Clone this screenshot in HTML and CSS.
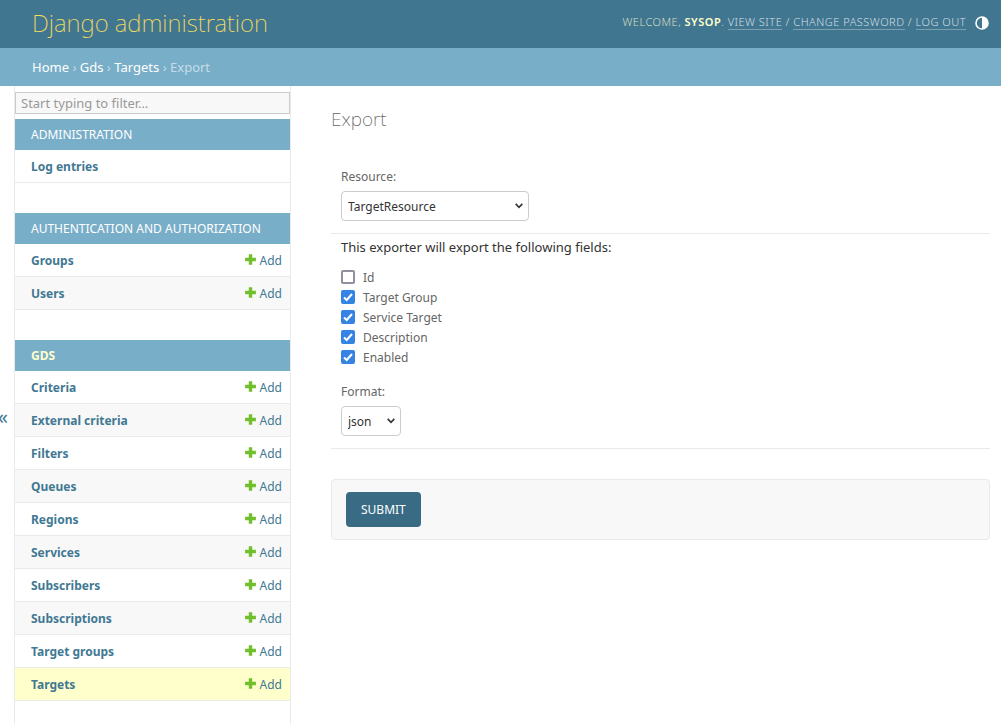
FILE: index.html
```html
<!DOCTYPE html>
<html lang="en">
<head>
<meta charset="utf-8">
<meta name="viewport" content="width=device-width, initial-scale=1">
<title>Export | Django administration</title>
<link rel="stylesheet" href="styles.css">
</head>
<body>
<svg class="sprite" aria-hidden="true">
  <symbol id="plus" viewBox="0 0 11 11"><path d="M3.8 0.2h3.4v3.6h3.7v3.4H7.2v3.6H3.8V7.2H0.1V3.8h3.7z" fill="#70bf2b"/></symbol>
</svg>
<header class="header">
  <div class="site-name">Django administration</div>
  <div class="user-tools">
    <span>Welcome, <strong>sysop</strong>. <a href="#">View site</a> / <a href="#">Change password</a> / <a href="#">Log out</a></span>
    <button class="theme-toggle" type="button" aria-label="Toggle theme">
      <svg width="14" height="14" viewBox="0 0 14 14"><circle cx="7" cy="7" r="6" fill="none" stroke="#fff" stroke-width="1.6"/><path d="M7 1a6 6 0 0 1 0 12z" fill="#fff"/></svg>
    </button>
  </div>
</header>
<nav class="breadcrumbs" aria-label="Breadcrumbs"><a href="#">Home</a> › <a href="#">Gds</a> › <a href="#">Targets</a> › Export</nav>
<div class="main">
  <button class="nav-toggle" type="button" aria-label="Toggle navigation">«</button>
  <nav class="sidebar" aria-label="Sidebar">
    <input class="nav-filter" type="search" placeholder="Start typing to filter…" aria-label="Filter navigation items">
    <table class="module">
      <caption><a href="#">Administration</a></caption>
      <tr><th scope="row"><a href="#">Log entries</a></th><td></td></tr>
    </table>
    <table class="module">
      <caption><a href="#">Authentication and Authorization</a></caption>
      <tr><th scope="row"><a href="#">Groups</a></th><td><a class="add" href="#"><svg><use href="#plus"/></svg>Add</a></td></tr>
      <tr><th scope="row"><a href="#">Users</a></th><td><a class="add" href="#"><svg><use href="#plus"/></svg>Add</a></td></tr>
    </table>
    <table class="module current-app">
      <caption><a href="#">Gds</a></caption>
      <tr><th scope="row"><a href="#">Criteria</a></th><td><a class="add" href="#"><svg><use href="#plus"/></svg>Add</a></td></tr>
      <tr><th scope="row"><a href="#">External criteria</a></th><td><a class="add" href="#"><svg><use href="#plus"/></svg>Add</a></td></tr>
      <tr><th scope="row"><a href="#">Filters</a></th><td><a class="add" href="#"><svg><use href="#plus"/></svg>Add</a></td></tr>
      <tr><th scope="row"><a href="#">Queues</a></th><td><a class="add" href="#"><svg><use href="#plus"/></svg>Add</a></td></tr>
      <tr><th scope="row"><a href="#">Regions</a></th><td><a class="add" href="#"><svg><use href="#plus"/></svg>Add</a></td></tr>
      <tr><th scope="row"><a href="#">Services</a></th><td><a class="add" href="#"><svg><use href="#plus"/></svg>Add</a></td></tr>
      <tr><th scope="row"><a href="#">Subscribers</a></th><td><a class="add" href="#"><svg><use href="#plus"/></svg>Add</a></td></tr>
      <tr><th scope="row"><a href="#">Subscriptions</a></th><td><a class="add" href="#"><svg><use href="#plus"/></svg>Add</a></td></tr>
      <tr><th scope="row"><a href="#">Target groups</a></th><td><a class="add" href="#"><svg><use href="#plus"/></svg>Add</a></td></tr>
      <tr class="current"><th scope="row"><a href="#" aria-current="page">Targets</a></th><td><a class="add" href="#"><svg><use href="#plus"/></svg>Add</a></td></tr>
    </table>
  </nav>
  <main class="content">
    <h1>Export</h1>
    <form>
      <div class="form-row">
        <label for="resource">Resource:</label>
        <select id="resource" class="wide"><option>TargetResource</option></select>
      </div>
      <div class="form-row fields">
        <p>This exporter will export the following fields:</p>
        <ul class="checks">
          <li><input type="checkbox" id="f1"><label for="f1">Id</label></li>
          <li><input type="checkbox" id="f2" checked><label for="f2">Target Group</label></li>
          <li><input type="checkbox" id="f3" checked><label for="f3">Service Target</label></li>
          <li><input type="checkbox" id="f4" checked><label for="f4">Description</label></li>
          <li><input type="checkbox" id="f5" checked><label for="f5">Enabled</label></li>
        </ul>
        <label for="format">Format:</label>
        <select id="format"><option>json</option></select>
      </div>
      <div class="submit-row"><button type="submit">Submit</button></div>
    </form>
  </main>
</div>
</body>
</html>
```
FILE: styles.css
```css
* { box-sizing: border-box; }
html { overflow: hidden; }
body {
  margin: 0;
  min-height: 100vh;
  display: flex;
  flex-direction: column;
  background: #fff;
  color: #333;
  font: 13px/18px "Noto Sans", sans-serif;
}
a { color: #417893; text-decoration: none; }
input, select, button { font: inherit; }
.sprite { position: absolute; width: 0; height: 0; }

.header {
  display: flex;
  justify-content: space-between;
  align-items: center;
  height: 48px;
  padding: 0 12px 2px 32px;
  background: #417690;
  color: #ffc;
}
.site-name { font-size: 24px; line-height: 32px; font-weight: 200; color: #f5dd5d; }
.user-tools {
  display: flex;
  align-items: center;
  gap: 9px;
  font-size: 11px;
  line-height: 14px;
  font-weight: 300;
  letter-spacing: 0.5px;
  text-transform: uppercase;
}
.user-tools span { margin-bottom: 2px; color: #d5dfc1; }
.user-tools strong { font-weight: 600; color: #ffc; }
.user-tools a { color: #d0dde3; border-bottom: 1px solid #7aa0b1; }
.theme-toggle { display: flex; padding: 0; border: 0; background: none; }

.breadcrumbs {
  padding: 10px 32px;
  background: #79aec8;
  color: #c4dce8;
}
.breadcrumbs a { color: #fff; }

.main { display: flex; flex: 1; height: calc(100vh - 86px); }
.nav-toggle {
  flex: 0 0 15px;
  min-width: 0;
  padding: 16px 6px 0 0;
  display: flex;
  align-items: center;
  justify-content: flex-end;
  border: 0;
  border-right: 1px solid #eaeaea;
  background: #fff;
  color: #417893;
  font-size: 20px;
}
.sidebar {
  flex: 0 0 276px;
  padding-top: 6px;
  border-right: 1px solid #eaeaea;
  overflow: hidden;
}
.nav-filter {
  display: block;
  width: 100%;
  height: 22px;
  margin-bottom: 5px;
  padding: 1px 5px;
  border: 1px solid #ccc;
  border-radius: 0;
  background: #f8f8f8;
  appearance: none;
}
.nav-filter::placeholder { color: #999; }
.module { width: 100%; margin-bottom: 30px; border-spacing: 0; }
.module caption {
  padding: 7px 16px 6px;
  background: #79aec8;
  text-align: left;
  font-size: 12px;
  text-transform: uppercase;
}
.module caption a { color: #fff; }
.module th, .module td { height: 33px; padding: 1px 8px 0 16px; border-bottom: 1px solid #eaeaea; text-align: left; font-size: 12px; }
.module th { font-weight: 700; }
.module td { text-align: right; }
.module tr:nth-child(even) { background: #f8f8f8; }
.module tr.current { background: #ffc; }
.current-app caption { font-weight: 700; }
.current-app caption a { color: #ffc; }
.add { display: flex; align-items: center; justify-content: flex-end; gap: 4px; }
.add svg { width: 11px; height: 11px; margin-bottom: 2px; }

.content { flex: 1; min-width: 0; padding: 20px 11px 0 40px; }
h1 { margin: 0 0 34px; font-size: 19px; line-height: 27px; font-weight: 200; color: #666; }
.form-row { padding: 0 10px 12px; border-bottom: 1px solid #eaeaea; }
.form-row label { display: block; color: #666; font-size: 12px; line-height: 19px; }
.form-row select {
  display: block;
  width: 60px;
  height: 30px;
  margin-top: 5px;
  padding: 1px 6px 0;
  border: 1px solid #ccc;
  border-radius: 4px;
  color: #333;
  font-size: 12px;
  appearance: none;
  background: #fff url("data:image/svg+xml,%3Csvg xmlns='http://www.w3.org/2000/svg' width='8' height='6'%3E%3Cpath d='M.7.9 4 4.4 7.3.9' fill='none' stroke='%23333' stroke-width='1.6'/%3E%3C/svg%3E") no-repeat right 5px center;
}
.form-row select.wide { width: 188px; }
.fields p { margin: 0; padding: 4px 0 11px; }
.checks { margin: 0 0 15px; padding: 0; list-style: none; }
.checks li { display: flex; align-items: center; gap: 8px; height: 20px; }
.checks input {
  width: 14px;
  height: 14px;
  margin: 0;
  appearance: none;
  border: 2px solid #8f8f9d;
  border-radius: 2px;
}
.checks input:checked {
  border: 0;
  background: #3584e4 url("data:image/svg+xml,%3Csvg xmlns='http://www.w3.org/2000/svg' width='14' height='14'%3E%3Cpath d='M3 7.5 5.7 10 11 4' fill='none' stroke='%23fff' stroke-width='2'/%3E%3C/svg%3E") center no-repeat;
}
.submit-row { margin-top: 30px; padding: 12px 14px; border: 1px solid #eaeaea; border-radius: 4px; background: #f8f8f8; }
.submit-row button {
  display: block;
  height: 35px;
  padding: 0 15px;
  border: 0;
  border-radius: 4px;
  background: #396b84;
  color: #fff;
  font-size: 12px;
  text-transform: uppercase;
}
```
